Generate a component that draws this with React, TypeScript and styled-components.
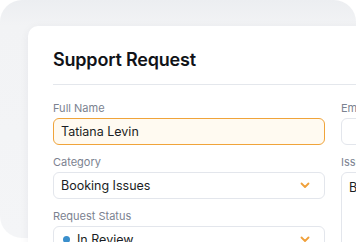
import styled, { createGlobalStyle } from "styled-components";

const GlobalStyle = createGlobalStyle`
  html, body {
    margin: 0;
    padding: 0;
    background: #ffffff;
    font-family: Inter, "Noto Sans", sans-serif;
    overflow: hidden;
    height: 242px;
  }
  * { box-sizing: border-box; }
`;

const Frame = styled.div`
  width: 356px;
  height: 238px;
  border-radius: 22px;
  background: linear-gradient(180deg, #eceef1 0px, #f2f3f5 26px, #f4f5f7 100%);
  padding: 26px 0 0 28px;
`;

const Card = styled.div`
  width: 620px;
  height: 300px;
  background: #ffffff;
  border-radius: 10px;
  box-shadow: 0 2px 10px rgba(30, 40, 60, 0.06);
  padding: 22px 0 0 25px;
`;

const Title = styled.h1`
  margin: 0;
  font-size: 18px;
  font-weight: 600;
  color: #111318;
  line-height: 24px;
  letter-spacing: -0.2px;
`;

const Divider = styled.div`
  height: 1px;
  background: #e4e7ec;
  margin: 12px 0 16px;
`;

const Grid = styled.div`
  display: grid;
  grid-template-columns: 272px 272px;
  column-gap: 16px;
  align-items: start;
`;

const Column = styled.div`
  display: flex;
  flex-direction: column;
`;

const Label = styled.div`
  font-size: 11px;
  line-height: 14px;
  color: #7b8290;
  margin-bottom: 3px;
`;

const Field = styled.div<{ $active?: boolean }>`
  height: 27px;
  border-radius: 6px;
  border: 1px solid ${(p) => (p.$active ? "#f0a43a" : "#e3e6ec")};
  background: ${(p) => (p.$active ? "#fffaf1" : "#ffffff")};
  display: flex;
  align-items: center;
  padding: 0 14px 0 7px;
  font-size: 12.5px;
  color: #1b1e24;
  margin-bottom: 10px;
`;

const Area = styled(Field)`
  height: 90px;
  align-items: flex-start;
  padding-top: 7px;
`;

const Value = styled.span`
  flex: 1;
  white-space: nowrap;
`;

const Dot = styled.span`
  width: 7px;
  height: 7px;
  border-radius: 50%;
  background: #3a8fcc;
  margin-right: 7px;
  margin-left: 2px;
`;

const Chevron = () => (
  <svg width="10" height="7" viewBox="0 0 10 7" fill="none">
    <path d="M1.5 1.5 L5 5 L8.5 1.5" stroke="#f0a03a" strokeWidth="1.8" strokeLinecap="round" strokeLinejoin="round" />
  </svg>
);

export default function App() {
  return (
    <>
      <GlobalStyle />
      <Frame>
        <Card>
          <Title>Support Request</Title>
          <Divider />
          <Grid>
            <Column>
              <Label>Full Name</Label>
              <Field $active>
                <Value>Tatiana Levin</Value>
              </Field>
              <Label>Category</Label>
              <Field>
                <Value>Booking Issues</Value>
                <Chevron />
              </Field>
              <Label>Request Status</Label>
              <Field>
                <Dot />
                <Value>In Review</Value>
                <Chevron />
              </Field>
            </Column>
            <Column>
              <Label>Email</Label>
              <Field>
                <Value></Value>
              </Field>
              <Label>Issue Details</Label>
              <Area>
                <Value>Booking confirmation was not received</Value>
              </Area>
            </Column>
          </Grid>
        </Card>
      </Frame>
    </>
  );
}
